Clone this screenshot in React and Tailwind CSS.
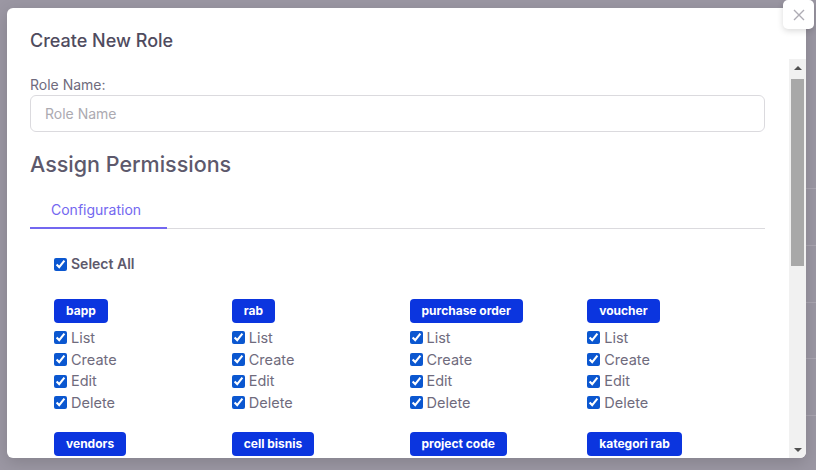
import React from "react";

const groups = [
  "bapp",
  "rab",
  "purchase order",
  "voucher",
  "vendors",
  "cell bisnis",
  "project code",
  "kategori rab",
];
const perms = ["List", "Create", "Edit", "Delete"];

function Check() {
  return (
    <input
      type="checkbox"
      defaultChecked
      className="m-0 h-[13px] w-[13px] shrink-0 accent-[#0b57d0]"
    />
  );
}

export default function App() {
  return (
    <div
      className="relative h-[470px] w-[816px] overflow-hidden bg-[#9b97a3]"
      style={{ fontFamily: "Inter, 'Open Sans', sans-serif" }}
    >
      {/* background page lines */}
      <div className="absolute right-0 top-[72px] flex w-[12px] flex-col">
        <div className="h-[117px] border-b border-[#aaa6b1]" />
        <div className="h-[57px] border-b border-[#aaa6b1]" />
        <div className="h-[57px] border-b border-[#aaa6b1]" />
        <div className="h-[56px] border-b border-[#aaa6b1]" />
        <div className="h-[57px] border-b border-[#aaa6b1]" />
      </div>

      {/* modal */}
      <div className="absolute left-[7px] top-[8px] flex h-[450px] w-[799px] flex-col overflow-hidden rounded-[6px] bg-white shadow-[0_4px_16px_rgba(0,0,0,0.15)]">
        <div className="h-[51px] shrink-0 pl-[23px] pt-[21px]">
          <h2 className="text-[18px] font-medium leading-[24px] text-[#4f4b5e]">Create New Role</h2>
        </div>
        <div className="flex min-h-0 flex-1">
          <div className="min-w-0 flex-1 overflow-hidden pl-[23px] pr-[24px] pt-[16px]">
            <div className="text-[14px] leading-[20px] text-[#6f6b7d]">Role Name:</div>
            <div className="flex h-[37px] items-center rounded-[6px] border border-[#dbdade] pl-[14px] text-[14px] text-[#acaab1]">
              Role Name
            </div>
            <div className="mt-[18px] text-[21.5px] font-medium leading-[28px] text-[#5d596c]">
              Assign Permissions
            </div>
            <div className="mt-[22px] flex border-b border-[#dbdade]">
              <div className="-mb-px w-[137px] border-b-2 border-[#7367f0] pb-[7px] pl-[21px] text-[14px] leading-[20px] text-[#7367f0]">
                Configuration
              </div>
            </div>
            <div className="pl-[24px] pt-[26px]">
              <label className="flex items-center gap-[4px] text-[14px] font-semibold leading-[18px] text-[#5d596c]">
                <Check />
                Select All
              </label>
              <div className="mt-[26px] grid grid-cols-4 gap-y-[18px]">
                {groups.map((g) => (
                  <div key={g} className="flex flex-col items-start">
                    <span className="flex h-[24px] items-center rounded-[4px] bg-[#0b35df] px-[12px] text-[12px] font-bold text-white">
                      {g}
                    </span>
                    <div className="mt-[4px] flex flex-col">
                      {perms.map((p) => (
                        <label
                          key={p}
                          className="flex h-[21.7px] items-center gap-[4px] text-[14.5px] text-[#6f6b7d]"
                        >
                          <Check />
                          {p}
                        </label>
                      ))}
                    </div>
                  </div>
                ))}
              </div>
            </div>
          </div>
          {/* scrollbar */}
          <div className="flex w-[17px] shrink-0 flex-col bg-[#f1f1f1]">
            <div className="flex h-[18px] items-center justify-center">
              <div className="h-0 w-0 border-x-[4px] border-b-[4px] border-x-transparent border-b-[#505050]" />
            </div>
            <div className="mx-[2px] mt-[2px] h-[187px] bg-[#a8a8a8]" />
            <div className="flex-1" />
            <div className="flex h-[17px] items-center justify-center">
              <div className="h-0 w-0 border-x-[4px] border-t-[4px] border-x-transparent border-t-[#505050]" />
            </div>
          </div>
        </div>
      </div>

      {/* close button */}
      <button className="absolute left-[783px] top-0 flex h-[29px] w-[31px] items-center justify-center rounded-[5px] bg-white shadow-[0_2px_6px_rgba(0,0,0,0.15)]">
        <svg width="12" height="12" viewBox="0 0 12 12" stroke="#aeacb4" strokeWidth="1.4" fill="none">
          <path d="M1 1L11 11M11 1L1 11" />
        </svg>
      </button>
    </div>
  );
}
